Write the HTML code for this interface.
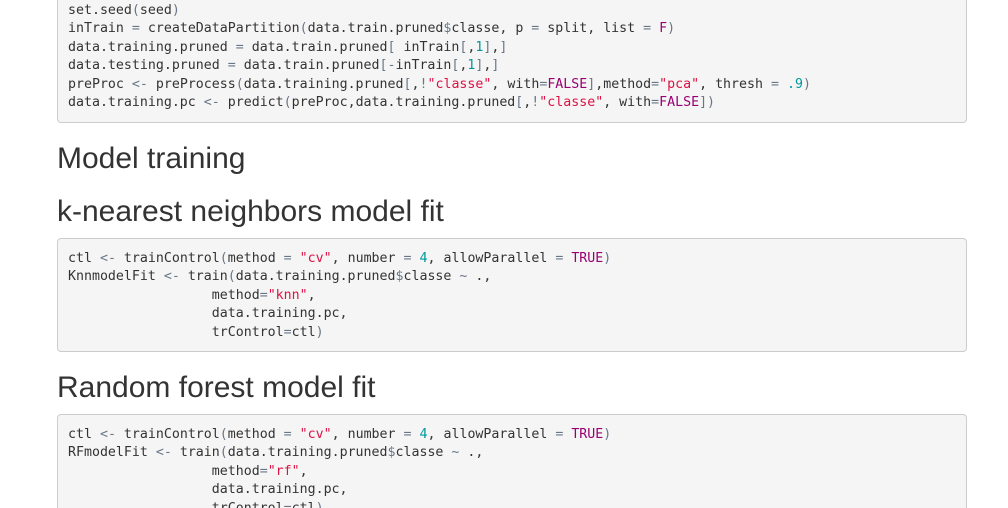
<!DOCTYPE html>
<html><head><meta charset="utf-8"><style>
html,body{margin:0;width:1008px;height:508px;overflow:hidden}
body{background:#fff;position:relative;font-family:"Liberation Sans",sans-serif;color:#333}
pre{position:absolute;left:57px;width:888px;margin:0;padding:9.5px 10px;background:#f5f5f5;border:1px solid #ccc;border-radius:4px;font-family:"DejaVu Sans Mono",monospace;font-size:13.27px;line-height:18.57px;color:#333;white-space:pre}
.o{color:#687687}.s{color:#dd1144}.n{color:#009999}.c{color:#990073}
h2{position:absolute;left:57px;margin:0;font-size:30px;font-weight:500;line-height:34px}
</style></head><body>
<pre style="top:-9px;height:111px">set.seed<span class="o">(</span>seed<span class="o">)</span>
inTrain <span class="o">=</span> createDataPartition<span class="o">(</span>data.train.pruned<span class="o">$</span>classe, p <span class="o">=</span> split, list <span class="o">=</span> <span class="c">F</span><span class="o">)</span>
data.training.pruned <span class="o">=</span> data.train.pruned<span class="o">[</span> inTrain<span class="o">[</span>,<span class="n">1</span><span class="o">]</span>,<span class="o">]</span>
data.testing.pruned <span class="o">=</span> data.train.pruned<span class="o">[-</span>inTrain<span class="o">[</span>,<span class="n">1</span><span class="o">]</span>,<span class="o">]</span>
preProc <span class="o">&lt;-</span> preProcess<span class="o">(</span>data.training.pruned<span class="o">[</span>,<span class="o">!</span><span class="s">"classe"</span>, with<span class="o">=</span><span class="c">FALSE</span><span class="o">]</span>,method<span class="o">=</span><span class="s">"pca"</span>, thresh <span class="o">=</span> <span class="n">.9</span><span class="o">)</span>
data.training.pc <span class="o">&lt;-</span> predict<span class="o">(</span>preProc,data.training.pruned<span class="o">[</span>,<span class="o">!</span><span class="s">"classe"</span>, with<span class="o">=</span><span class="c">FALSE</span><span class="o">])</span></pre>
<h2 style="top:142px">Model training</h2>
<h2 style="top:195px">k-nearest neighbors model fit</h2>
<pre style="top:238px;height:93px;padding-top:10.5px;padding-bottom:8.5px">ctl <span class="o">&lt;-</span> trainControl<span class="o">(</span>method <span class="o">=</span> <span class="s">"cv"</span>, number <span class="o">=</span> <span class="n">4</span>, allowParallel <span class="o">=</span> <span class="c">TRUE</span><span class="o">)</span>
KnnmodelFit <span class="o">&lt;-</span> train<span class="o">(</span>data.training.pruned<span class="o">$</span>classe <span class="o">~</span> .,
                  method<span class="o">=</span><span class="s">"knn"</span>,
                  data.training.pc,
                  trControl<span class="o">=</span>ctl<span class="o">)</span></pre>
<h2 style="top:371px">Random forest model fit</h2>
<pre style="top:414px;height:93px;padding-top:10.5px;padding-bottom:8.5px">ctl <span class="o">&lt;-</span> trainControl<span class="o">(</span>method <span class="o">=</span> <span class="s">"cv"</span>, number <span class="o">=</span> <span class="n">4</span>, allowParallel <span class="o">=</span> <span class="c">TRUE</span><span class="o">)</span>
RFmodelFit <span class="o">&lt;-</span> train<span class="o">(</span>data.training.pruned<span class="o">$</span>classe <span class="o">~</span> .,
                  method<span class="o">=</span><span class="s">"rf"</span>,
                  data.training.pc,
                  trControl<span class="o">=</span>ctl<span class="o">)</span></pre>
</body></html>
